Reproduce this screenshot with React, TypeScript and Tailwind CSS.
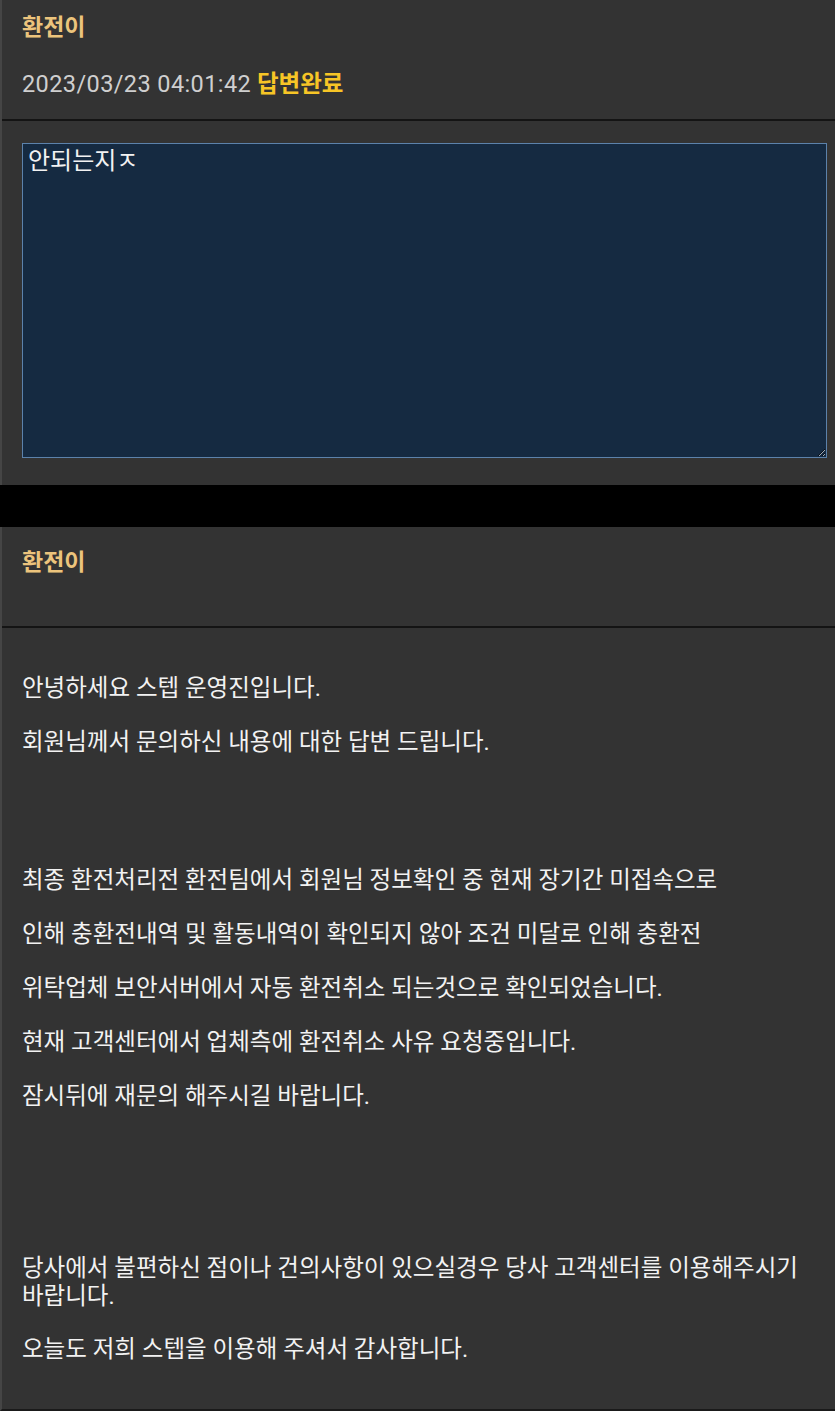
import React from "react";

const font = { fontFamily: "Roboto, 'Noto Sans CJK KR', sans-serif" };

export default function App() {
  return (
    <div className="w-[835px] bg-black" style={font}>
      {/* Card 1 */}
      <div className="bg-[#333333] border-l-2 border-[#454545]">
        <div className="h-[119px] pl-[20px] pt-[12px]">
          <div className="text-[23px] leading-[32px] font-bold text-[#ecc47c]">환전이</div>
          <div className="mt-[24px] text-[23.5px] leading-[32px] text-[#cfcfcf]">
            <span className="tracking-[0.4px]">2023/03/23 04:01:42</span>{" "}
            <span className="font-bold text-[#f7c526]">답변완료</span>
          </div>
        </div>
        <div className="h-[2px] bg-[#141414]" />
        <div className="h-[364px] pl-[20px] pr-[8px] pt-[22px]">
          <textarea
            readOnly
            defaultValue="안되는지ㅈ"
            className="block w-[805px] h-[315px] bg-[#152a41] border border-[#5c82ab] text-[#f2f2f2] text-[24px] leading-[30px] px-[5px] py-[2px] outline-none"
            style={font}
          />
        </div>
      </div>

      <div className="h-[42px] bg-black" />

      {/* Card 2 */}
      <div className="bg-[#333333] border-l-2 border-[#454545] border-b-2 border-b-[#1a1a1a]">
        <div className="h-[99px] pl-[20px] pt-[20px]">
          <div className="text-[23px] leading-[32px] font-bold text-[#ecc47c]">환전이</div>
        </div>
        <div className="h-[2px] bg-[#141414]" />
        <div className="h-[781px] pl-[20px] pr-[20px] pt-[20px] text-[23.5px] leading-[28px] text-[#f2f2f2]">
          <p className="mt-[26px]">안녕하세요 스텝 운영진입니다.</p>
          <p className="mt-[26px]">회원님께서 문의하신 내용에 대한 답변 드립니다.</p>
          <p className="mt-[110px]">최종 환전처리전 환전팀에서 회원님 정보확인 중 현재 장기간 미접속으로</p>
          <p className="mt-[26px]">인해 충환전내역 및 활동내역이 확인되지 않아 조건 미달로 인해 충환전</p>
          <p className="mt-[26px]">위탁업체 보안서버에서 자동 환전취소 되는것으로 확인되었습니다.</p>
          <p className="mt-[26px]">현재 고객센터에서 업체측에 환전취소 사유 요청중입니다.</p>
          <p className="mt-[26px]">잠시뒤에 재문의 해주시길 바랍니다.</p>
          <p className="mt-[144px]">당사에서 불편하신 점이나 건의사항이 있으실경우 당사 고객센터를 이용해주시기 바랍니다.</p>
          <p className="mt-[25px]">오늘도 저희 스텝을 이용해 주셔서 감사합니다.</p>
        </div>
      </div>
    </div>
  );
}
